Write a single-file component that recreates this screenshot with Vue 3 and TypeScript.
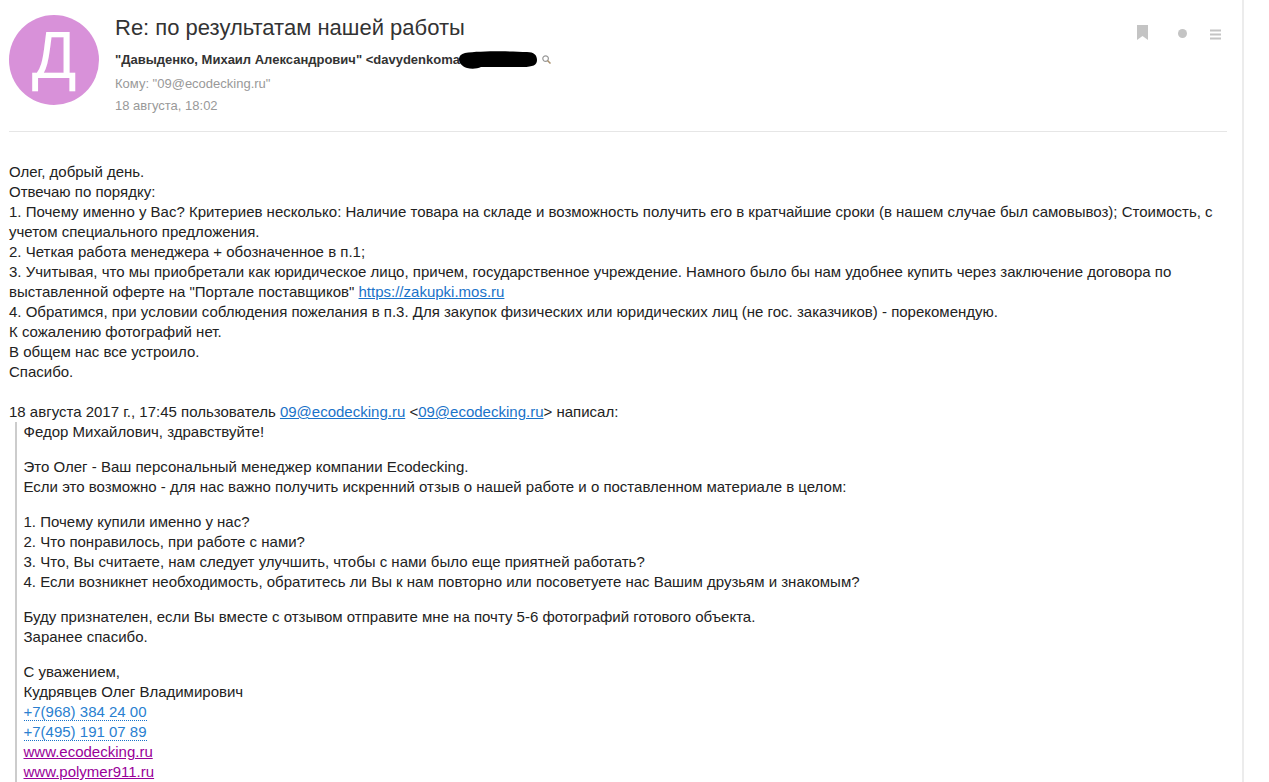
<template>
  <div class="page">
    <div class="mail">
      <header class="head">
        <div class="avatar">Д</div>
        <div class="meta">
          <h1 class="subject">Re: по результатам нашей работы</h1>
          <div class="from">
            <b>"Давыденко, Михаил Александрович" &lt;davydenkoma</b>
            <svg class="blot" width="78" height="18" viewBox="0 0 78 18">
              <path d="M6 2C20 0 50 0 68 1c7 0 10 3 10 8s-4 7-14 7H22c-4 2-10 2-14 1C2 15 0 11 0 8c0-3 2-5 6-6z" />
            </svg>
            <svg class="lens" width="9" height="9" viewBox="0 0 9 9">
              <circle cx="3.6" cy="3.6" r="2.8" fill="none" stroke="#999" stroke-width="1.2" />
              <path d="M5.5 5.5 8.5 8.5" stroke="#a98f6c" stroke-width="1.5" />
            </svg>
          </div>
          <div class="to">Кому: "09@ecodecking.ru"</div>
          <div class="date">18 августа, 18:02</div>
        </div>
        <div class="actions">
          <svg class="mark" width="11" height="15" viewBox="0 0 11 15"><path d="M0 0h11v15L5.5 11 0 15z" fill="#c4c4c4" /></svg>
          <svg class="dot" width="9" height="9" viewBox="0 0 9 9"><circle cx="4.5" cy="4.5" r="4.5" fill="#c4c4c4" /></svg>
          <svg class="menu" width="11" height="11" viewBox="0 0 11 11"><path d="M0 1.5h11M0 5.5h11M0 9.5h11" stroke="#c4c4c4" stroke-width="2" /></svg>
        </div>
      </header>

      <div class="body">
        <div v-for="line in reply" :key="line">{{ line }}</div>
        <div>3. Учитывая, что мы приобретали как юридическое лицо, причем, государственное учреждение. Намного было бы нам удобнее купить через заключение договора по выставленной оферте на "Портале поставщиков" <a class="link">https://zakupki.mos.ru</a></div>
        <div v-for="line in replyEnd" :key="line">{{ line }}</div>
        <div class="gap"></div>
        <div>18 августа 2017 г., 17:45 пользователь <a class="link">09@ecodecking.ru</a> &lt;<a class="link">09@ecodecking.ru</a>&gt; написал:</div>
        <blockquote class="quote">
          <div>Федор Михайлович, здравствуйте!</div>
          <div class="gap small"></div>
          <div>Это Олег - Ваш персональный менеджер компании Ecodecking.</div>
          <div>Если это возможно - для нас важно получить искренний отзыв о нашей работе и о поставленном материале в целом:</div>
          <div class="gap small"></div>
          <div v-for="q in questions" :key="q">{{ q }}</div>
          <div class="gap small"></div>
          <div>Буду признателен, если Вы вместе с отзывом отправите мне на почту 5-6 фотографий готового объекта.</div>
          <div>Заранее спасибо.</div>
          <div class="gap small"></div>
          <div>С уважением,</div>
          <div>Кудрявцев Олег Владимирович</div>
          <div v-for="p in phones" :key="p"><a class="phone">{{ p }}</a></div>
          <div v-for="s in sites" :key="s"><a class="visited">{{ s }}</a></div>
        </blockquote>
      </div>
    </div>
  </div>
</template>

<script setup lang="ts">
const reply: string[] = [
  "Олег, добрый день.",
  "Отвечаю по порядку:",
  "1. Почему именно у Вас? Критериев несколько: Наличие товара на складе и возможность получить его в кратчайшие сроки (в нашем случае был самовывоз); Стоимость, с учетом специального предложения.",
  "2. Четкая работа менеджера + обозначенное в п.1;",
];

const replyEnd: string[] = [
  "4. Обратимся, при условии соблюдения пожелания в п.3. Для закупок физических или юридических лиц (не гос. заказчиков) - порекомендую.",
  "К сожалению фотографий нет.",
  "В общем нас все устроило.",
  "Спасибо.",
];

const questions: string[] = [
  "1. Почему купили именно у нас?",
  "2. Что понравилось, при работе с нами?",
  "3. Что, Вы считаете, нам следует улучшить, чтобы с нами было еще приятней работать?",
  "4. Если возникнет необходимость, обратитесь ли Вы к нам повторно или посоветуете нас Вашим друзьям и знакомым?",
];

const phones: string[] = ["+7(968) 384 24 00", "+7(495) 191 07 89"];
const sites: string[] = ["www.ecodecking.ru", "www.polymer911.ru"];
</script>

<style>
html,
body {
  margin: 0;
  height: 100%;
  overflow: hidden;
  background: #fff;
}
</style>

<style scoped>
.page {
  height: 782px;
  width: 1244px;
  box-sizing: border-box;
  border-right: 2px solid #ececec;
  overflow: hidden;
  font-family: "Liberation Sans", Arial, sans-serif;
  color: #222;
}

.mail {
  width: 1218px;
  margin-left: 9px;
}

.head {
  display: flex;
  height: 132px;
  padding-top: 15px;
  box-sizing: border-box;
  border-bottom: 1px solid #e6e6e6;
}

.avatar {
  flex: none;
  width: 90px;
  height: 90px;
  border-radius: 50%;
  background: #d891d9;
  color: #fff;
  font-size: 66px;
  line-height: 80px;
  text-align: center;
}

.meta {
  flex: 1;
  margin-left: 16px;
}

.subject {
  margin: 0;
  font-size: 22px;
  font-weight: 400;
  line-height: 26px;
  color: #333;
}

.from {
  display: flex;
  align-items: center;
  margin-top: 8px;
  height: 20px;
  font-size: 13px;
  color: #333;
}

.blot {
  margin: 2px 0 0 -1px;
}

.lens {
  margin-left: 5px;
}

.to,
.date {
  font-size: 13px;
  line-height: 22px;
  color: #999;
}

.to {
  margin-top: 4px;
}

.actions {
  display: flex;
  align-items: flex-start;
  margin-top: 10px;
  margin-right: 6px;
}

.dot {
  margin: 4px 23px 0 30px;
}

.menu {
  margin-top: 4px;
}

.body {
  padding-top: 30px;
  font-size: 15px;
  line-height: 20px;
  color: #222;
}

.gap {
  height: 20px;
}

.gap.small {
  height: 15px;
}

.quote {
  margin: 0 0 0 6px;
  padding-left: 6.5px;
  border-left: 2px solid #ccc;
}

.link {
  color: #1a73c9;
  text-decoration: underline;
}

.phone {
  color: #2a7fd0;
  border-bottom: 1px dotted #1a73c9;
}

.visited {
  color: #990099;
  text-decoration: underline;
}
</style>
